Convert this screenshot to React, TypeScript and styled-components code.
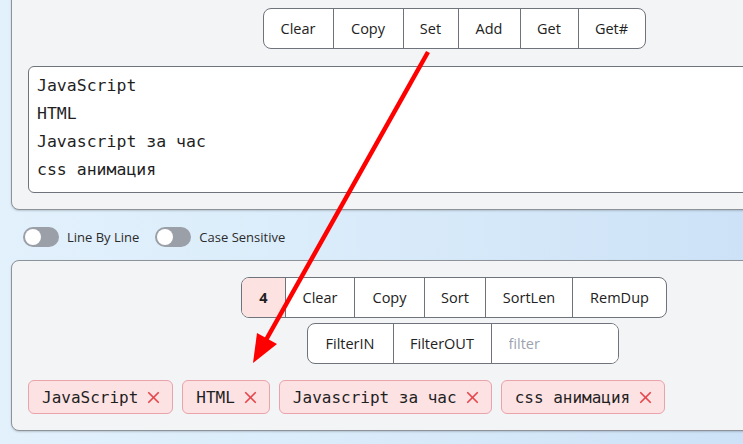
import * as React from 'react';
import styled, { createGlobalStyle } from 'styled-components';
import { X } from 'lucide-react';

const GlobalStyle = createGlobalStyle`
  html, body {
    margin: 0;
    padding: 0;
    overflow: hidden;
  }
  body {
    background: linear-gradient(90deg, #e2f1fc 0%, #d9ebfa 50%, #cde2f7 100%);
    font-family: 'Open Sans', 'Noto Sans', sans-serif;
    color: #222;
  }
`;

const topButtons = [
  { label: 'Clear', w: 69 },
  { label: 'Copy', w: 70 },
  { label: 'Set', w: 55 },
  { label: 'Add', w: 62 },
  { label: 'Get', w: 58 },
  { label: 'Get#', w: 67 },
];

const listButtons = [
  { label: 'Clear', w: 68 },
  { label: 'Copy', w: 70 },
  { label: 'Sort', w: 61 },
  { label: 'SortLen', w: 87 },
  { label: 'RemDup', w: 94 },
];

const lines = ['JavaScript', 'HTML', 'Javascript за час', 'css анимация'];

export default function App() {
  return (
    <Viewport>
      <GlobalStyle />
      <Page>
        <Panel>
          <ButtonRow>
            <Group>
              {topButtons.map(b => (
                <Btn key={b.label} $w={b.w}>
                  {b.label}
                </Btn>
              ))}
            </Group>
          </ButtonRow>
          <Editor readOnly value={lines.join('\n')} />
        </Panel>

        <Options>
          <Toggle>
            <Track>
              <Knob />
            </Track>
            Line By Line
          </Toggle>
          <Toggle>
            <Track>
              <Knob />
            </Track>
            Case Sensitive
          </Toggle>
        </Options>

        <Panel>
          <ButtonRow>
            <Group>
              <Count>4</Count>
              {listButtons.map(b => (
                <Btn key={b.label} $w={b.w}>
                  {b.label}
                </Btn>
              ))}
            </Group>
          </ButtonRow>
          <ButtonRow $shift={17}>
            <Group>
              <Btn $w={85}>FilterIN</Btn>
              <Btn $w={98}>FilterOUT</Btn>
              <FilterInput placeholder="filter" />
            </Group>
          </ButtonRow>
          <Tags>
            {lines.map(l => (
              <Tag key={l}>
                {l}
                <Remove size={19} strokeWidth={2.2} />
              </Tag>
            ))}
          </Tags>
        </Panel>
      </Page>

      {/* annotation arrow drawn over the page */}
      <Arrow width="743" height="444" viewBox="0 0 743 444">
        <line x1="428" y1="52" x2="266" y2="340" stroke="#ff0000" strokeWidth="4.5" />
        <polygon points="253,363 257,333 277,344" fill="#ff0000" />
      </Arrow>
    </Viewport>
  );
}

const Viewport = styled.div`
  position: relative;
  width: 743px;
  height: 444px;
  overflow: hidden;
`;

const Page = styled.div`
  margin-top: -9px;
  padding-left: 11px;
  width: 886px;
`;

const Panel = styled.div`
  box-sizing: border-box;
  width: 886px;
  background: #f3f4f6;
  border: 1px solid #8e9299;
  border-radius: 8px;
  box-shadow: 0 1px 2px rgba(0, 0, 0, 0.18);
  padding: 16px;
  display: flex;
  flex-direction: column;
`;

const ButtonRow = styled.div<{ $shift?: number }>`
  display: flex;
  justify-content: center;
  padding-left: ${p => p.$shift || 0}px;
  & + & {
    margin-top: 5px;
  }
`;

const Group = styled.div`
  display: flex;
  height: 41px;
  box-sizing: border-box;
  border: 1px solid #6f737b;
  border-radius: 8px;
  background: #fff;
  overflow: hidden;
`;

const Btn = styled.div<{ $w: number }>`
  width: ${p => p.$w}px;
  box-sizing: border-box;
  display: flex;
  align-items: center;
  justify-content: center;
  font-size: 14.5px;
  color: #222;
  & + & {
    border-left: 1px solid #6f737b;
  }
`;

const Count = styled.div`
  width: 43px;
  display: flex;
  align-items: center;
  justify-content: center;
  background: #fde2e2;
  border-right: 1px solid #6f737b;
  font-weight: 700;
  font-size: 14.5px;
  color: #1f1f1f;
`;

const FilterInput = styled.input`
  width: 127px;
  box-sizing: border-box;
  border: none;
  border-left: 1px solid #6f737b;
  outline: none;
  padding: 0 0 0 17px;
  font-family: 'Open Sans', 'Noto Sans', sans-serif;
  font-size: 14.5px;
  background: #fff;
  &::placeholder {
    color: #9ca3af;
  }
`;

const Editor = styled.textarea`
  margin-top: 17px;
  box-sizing: border-box;
  height: 127px;
  width: 100%;
  resize: none;
  border: 1px solid #6f737b;
  border-radius: 6px;
  background: #fff;
  padding: 5px 8px;
  font-family: 'DejaVu Sans Mono', monospace;
  font-size: 16.5px;
  line-height: 28px;
  color: #1f1f1f;
  outline: none;
  overflow: hidden;
`;

const Options = styled.div`
  display: flex;
  align-items: center;
  gap: 16px;
  height: 20px;
  margin: 17px 0 13px;
  padding-left: 12px;
`;

const Toggle = styled.label`
  display: flex;
  align-items: center;
  gap: 8px;
  font-size: 13px;
  color: #2b2b2b;
`;

const Track = styled.span`
  width: 36px;
  height: 20px;
  border-radius: 10px;
  background: #9a9fa8;
  display: flex;
  align-items: center;
  padding-left: 2px;
  box-sizing: border-box;
`;

const Knob = styled.span`
  width: 16px;
  height: 16px;
  border-radius: 50%;
  background: #fff;
`;

const Tags = styled.div`
  display: flex;
  flex-wrap: wrap;
  gap: 9px;
  margin-top: 16px;
`;

const Tag = styled.div`
  display: flex;
  align-items: center;
  gap: 6px;
  height: 34px;
  box-sizing: border-box;
  padding: 0 9px 0 13px;
  background: #fde2e4;
  border: 1px solid #e9a3ab;
  border-radius: 6px;
  font-family: 'DejaVu Sans Mono', monospace;
  font-size: 16px;
  color: #1f1f1f;
`;

const Remove = styled(X)`
  color: #e5484d;
  flex-shrink: 0;
`;

const Arrow = styled.svg`
  position: absolute;
  top: 0;
  left: 0;
  pointer-events: none;
`;
